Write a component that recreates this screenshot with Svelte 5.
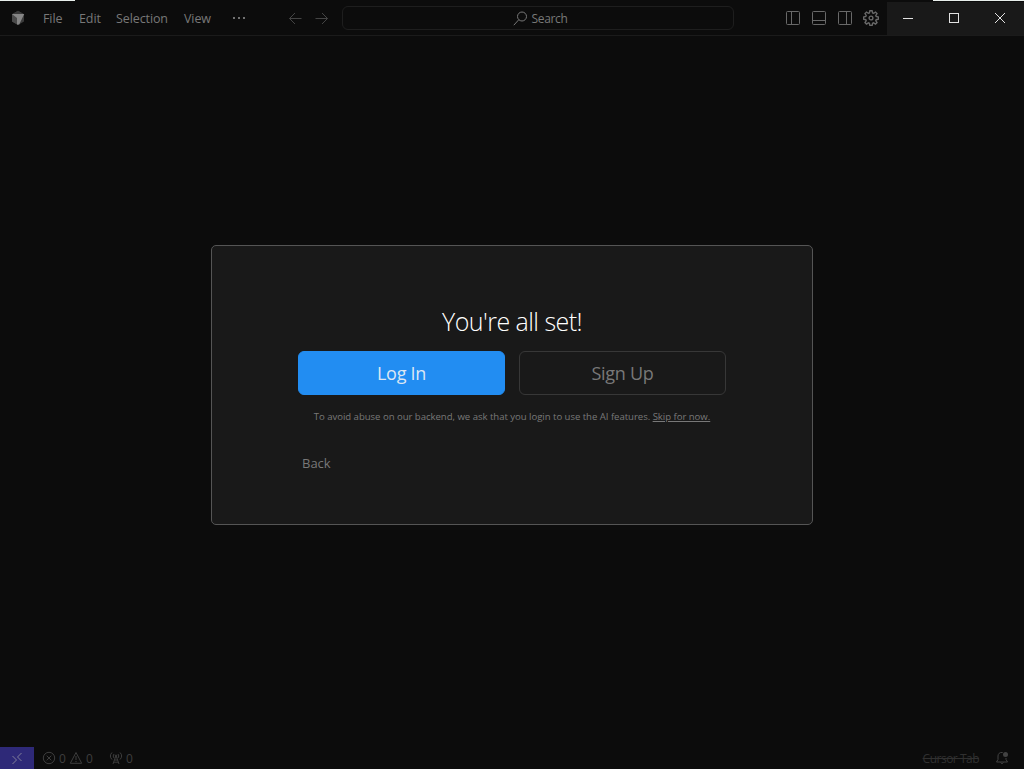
<script lang="ts">
    const menus = [
        { label: 'File', width: 36 },
        { label: 'Edit', width: 37 },
        { label: 'Selection', width: 68 },
        { label: 'View', width: 48 },
    ];
</script>

<div class="window">
    <header class="titlebar">
        <i class="edge edge-left"></i>
        <i class="edge edge-right"></i>

        <svg class="logo" width="14" height="16" viewBox="0 0 14 16" aria-hidden="true">
            <path d="M7 .8 13 4.2v7.4L7 15.1 1 11.6V4.2z" fill="#3c3c3c" />
            <path d="M1 4.2 7 8v7.1L1 11.6z" fill="#4a4a4a" />
            <path d="M7 .8 13 4.2H1z" fill="#393939" />
            <path d="M.8 4h12.4L8.200 14.500H6V8z" fill="#858585" />
        </svg>

        <nav class="menus">
            {#each menus as menu}
                <span class="menu" style="width: {menu.width}px">{menu.label}</span>
            {/each}
            <svg width="16" height="16" viewBox="0 0 16 16" aria-hidden="true">
                <rect x="1" y="7" width="2" height="2" />
                <rect x="6" y="7" width="2" height="2" />
                <rect x="11" y="7" width="2" height="2" />
            </svg>
        </nav>

        <div class="history">
            <svg width="14" height="13" viewBox="0 0 14 13" aria-hidden="true"><path d="M13.5 6.5h-12M7 1 1.5 6.5 7 12" /></svg>
            <svg width="14" height="13" viewBox="0 0 14 13" aria-hidden="true"><path d="M1.5 6.5h12M8 1l5.500 5.500L8 12" /></svg>
        </div>

        <div class="search">
            <svg width="15" height="15" viewBox="0 0 15 15" aria-hidden="true"><circle cx="9" cy="5.5" r="4.5" /><path d="M5.800 8.700.8 14.200" /></svg>
            <span>Search</span>
        </div>

        <div class="layout-actions">
            <svg width="16" height="16" viewBox="0 0 16 16" aria-hidden="true"><rect x="1.5" y="1.5" width="13" height="13" rx="1" /><path d="M6.5 1.5v13" /></svg>
            <svg width="16" height="16" viewBox="0 0 16 16" aria-hidden="true"><rect x="1.5" y="1.5" width="13" height="13" rx="1" /><path d="M1.5 10.5h13" /></svg>
            <svg width="16" height="16" viewBox="0 0 16 16" aria-hidden="true"><rect x="1.5" y="1.5" width="13" height="13" rx="1" /><path d="M9.5 1.5v13" /></svg>
            <svg class="gear" width="16" height="16" viewBox="0 0 16 16" aria-hidden="true">
                <path d="M6.9.7h2.2l.5 2.2 1 .4 1.9-1.2 1.5 1.5-1.2 1.9.4 1 2.2.5v2.2l-2.2.5-.4 1 1.2 1.9-1.5 1.5-1.9-1.2-1 .4-.5 2.2H6.9l-.5-2.2-1-.4-1.9 1.2L2 12.600l1.2-1.9-.4-1L.6 9.200V7l2.2-.5.4-1L2 3.600l1.5-1.5 1.9 1.2 1-.4z" />
                <circle cx="8" cy="8" r="1.9" />
            </svg>
        </div>

        <div class="window-controls">
            <svg width="11" height="11" viewBox="0 0 11 11" aria-hidden="true"><path d="M0 5.500h10" /></svg>
            <svg width="11" height="11" viewBox="0 0 11 11" aria-hidden="true"><rect x=".5" y=".5" width="9" height="9" /></svg>
            <svg width="11" height="11" viewBox="0 0 11 11" aria-hidden="true"><path d="m0 0 10 10m0-10L0 10" /></svg>
        </div>
    </header>

    <main class="content">
        <section class="dialog">
            <h1>You're all set!</h1>
            <div class="buttons">
                <button class="btn primary">Log In</button>
                <button class="btn">Sign Up</button>
            </div>
            <p class="note"><span>To avoid abuse on our backend, we ask that you login to use the AI features. <u>Skip for now.</u></span></p>
            <button class="back">Back</button>
        </section>
    </main>

    <footer class="statusbar">
        <div class="remote">
            <svg width="12" height="13" viewBox="0 0 12 13" aria-hidden="true"><path d="m1.500 4 4 4-4 4M10.500 1l-4 4 4 4" /></svg>
        </div>
        <div class="problems">
            <svg width="14" height="14" viewBox="0 0 14 14" aria-hidden="true"><circle cx="7" cy="7" r="5.7" /><path d="m4.700 4.700 4.600 4.600m0-4.600L4.700 9.300" /></svg>
            <span>0</span>
            <svg width="14" height="14" viewBox="0 0 14 14" aria-hidden="true"><path d="m7 1.500 5.700 10.800H1.300zM7 5v4m0 1v1.200" /></svg>
            <span>0</span>
        </div>
        <div class="ports">
            <svg width="14" height="14" viewBox="0 0 14 14" aria-hidden="true"><path d="M3 1.500Q-.3 5 3 8.500M11 1.500q3.300 3.500 0 7M5 3Q3.300 5 5 7M9 3q1.700 2 0 4M7 4.500 4 13M7 4.500 10 13M5.600 9h2.800M4.800 11.200h4.400" /><circle cx="7" cy="4.7" r=".7" /></svg>
            <span>0</span>
        </div>
        <s class="tab-status">Cursor Tab</s>
        <svg class="bell" width="14" height="14" viewBox="0 0 14 14" aria-hidden="true">
            <path d="M7.700 1.500C4.500 1 3 3 3 5v3.500L1.500 11h11L11 8.500V7M5.500 11.500q1.500 2.500 3 0" />
            <circle class="dot" cx="10.5" cy="3.5" r="2.5" />
        </svg>
    </footer>
</div>

<style>
    :global(body) {
        background: #0c0c0c;
    }
    .window {
        display: flex;
        flex-direction: column;
        width: 1024px;
        height: 769px;
        overflow: hidden;
        background: #0c0c0c;
        color: #787878;
        font-family: "Open Sans", "Noto Sans", sans-serif;
        font-size: 13px;
    }
    svg {
        display: block;
        flex: none;
        fill: none;
        stroke: currentColor;
    }
    button {
        padding: 0;
        border: none;
        background: none;
        color: inherit;
        font: inherit;
    }

    .titlebar {
        position: relative;
        display: flex;
        align-items: center;
        box-sizing: border-box;
        height: 36px;
        border-bottom: 1px solid #1b1b1b;
    }
    .edge {
        position: absolute;
        top: 0;
        height: 1px;
        background: #e8eeeb;
    }
    .edge-left { left: 0; width: 75px; }
    .edge-right { right: 0; width: 91px; }
    .logo {
        margin: 1px 18px 0 11px;
        stroke: none;
    }
    .menus {
        display: flex;
        align-items: center;
        width: 245px;
        margin-top: 1px;
    }
    .menus svg {
        fill: #717171;
        stroke: none;
    }
    .menu {
        flex: none;
        padding-top: 1px;
        font-size: 12.5px;
        line-height: 18px;
        letter-spacing: -0.1px;
    }
    .history {
        display: flex;
        gap: 12px;
        width: 54px;
        margin-top: 1px;
        color: #444;
    }
    .search {
        display: flex;
        align-items: center;
        justify-content: center;
        gap: 4px;
        box-sizing: border-box;
        width: 392px;
        height: 24px;
        margin-top: 1px;
        padding-left: 4px;
        border: 1px solid #1e1e1e;
        border-radius: 6px;
        font-size: 12px;
        letter-spacing: -0.35px;
    }
    .layout-actions {
        display: flex;
        gap: 10px;
        margin: 1px 8px 0 51px;
        color: #696969;
    }
    .gear {
        stroke-width: 1.4;
    }
    .window-controls {
        display: flex;
        align-items: center;
        gap: 35px;
        box-sizing: border-box;
        width: 137px;
        height: 33px;
        margin-top: 2px;
        padding-left: 16px;
        background: #191919;
        color: #e2e2e2;
    }

    .content {
        flex: 1;
        padding-top: 209px;
    }
    .dialog {
        box-sizing: border-box;
        width: 602px;
        height: 280px;
        margin: 0 auto;
        padding: 56px 86px 0;
        border: 1px solid #555;
        border-radius: 5px;
        background: #191919;
    }
    h1 {
        margin: 0;
        color: #fff;
        font-size: 25px;
        font-weight: 300;
        line-height: 38px;
        letter-spacing: -0.55px;
        text-align: center;
        white-space: nowrap;
    }
    .buttons {
        display: flex;
        gap: 14px;
        margin-top: 11px;
    }
    .btn {
        box-sizing: border-box;
        width: 207px;
        height: 44px;
        border: 1px solid #373737;
        border-radius: 6px;
        font-size: 18px;
        letter-spacing: -0.3px;
    }
    .primary {
        border-color: #228df2;
        background: #228df2;
        color: #dce7f4;
    }
    .note {
        display: flex;
        justify-content: center;
        margin: 14px 0 0;
        font-size: 9.6px;
        line-height: 16px;
        letter-spacing: -0.04px;
        white-space: nowrap;
    }
    .back {
        display: block;
        margin: 28px 0 0 4px;
        font-size: 13px;
        line-height: 20px;
    }

    .statusbar {
        display: flex;
        align-items: center;
        height: 22px;
        color: #3e3e3e;
        font-size: 12px;
    }
    .remote {
        display: flex;
        align-items: center;
        justify-content: center;
        width: 34px;
        height: 22px;
        background: #2e2978;
        color: #807d9a;
    }
    .problems {
        display: flex;
        align-items: center;
        gap: 3px;
        width: 67px;
        margin-left: 8px;
    }
    .ports {
        display: flex;
        align-items: center;
        gap: 3px;
    }
    .tab-status {
        margin-left: auto;
        color: #303030;
        letter-spacing: -0.5px;
    }
    .bell {
        margin: 0 15px 0 16px;
        color: #424242;
    }
    .dot {
        fill: currentColor;
        stroke: none;
    }
</style>
